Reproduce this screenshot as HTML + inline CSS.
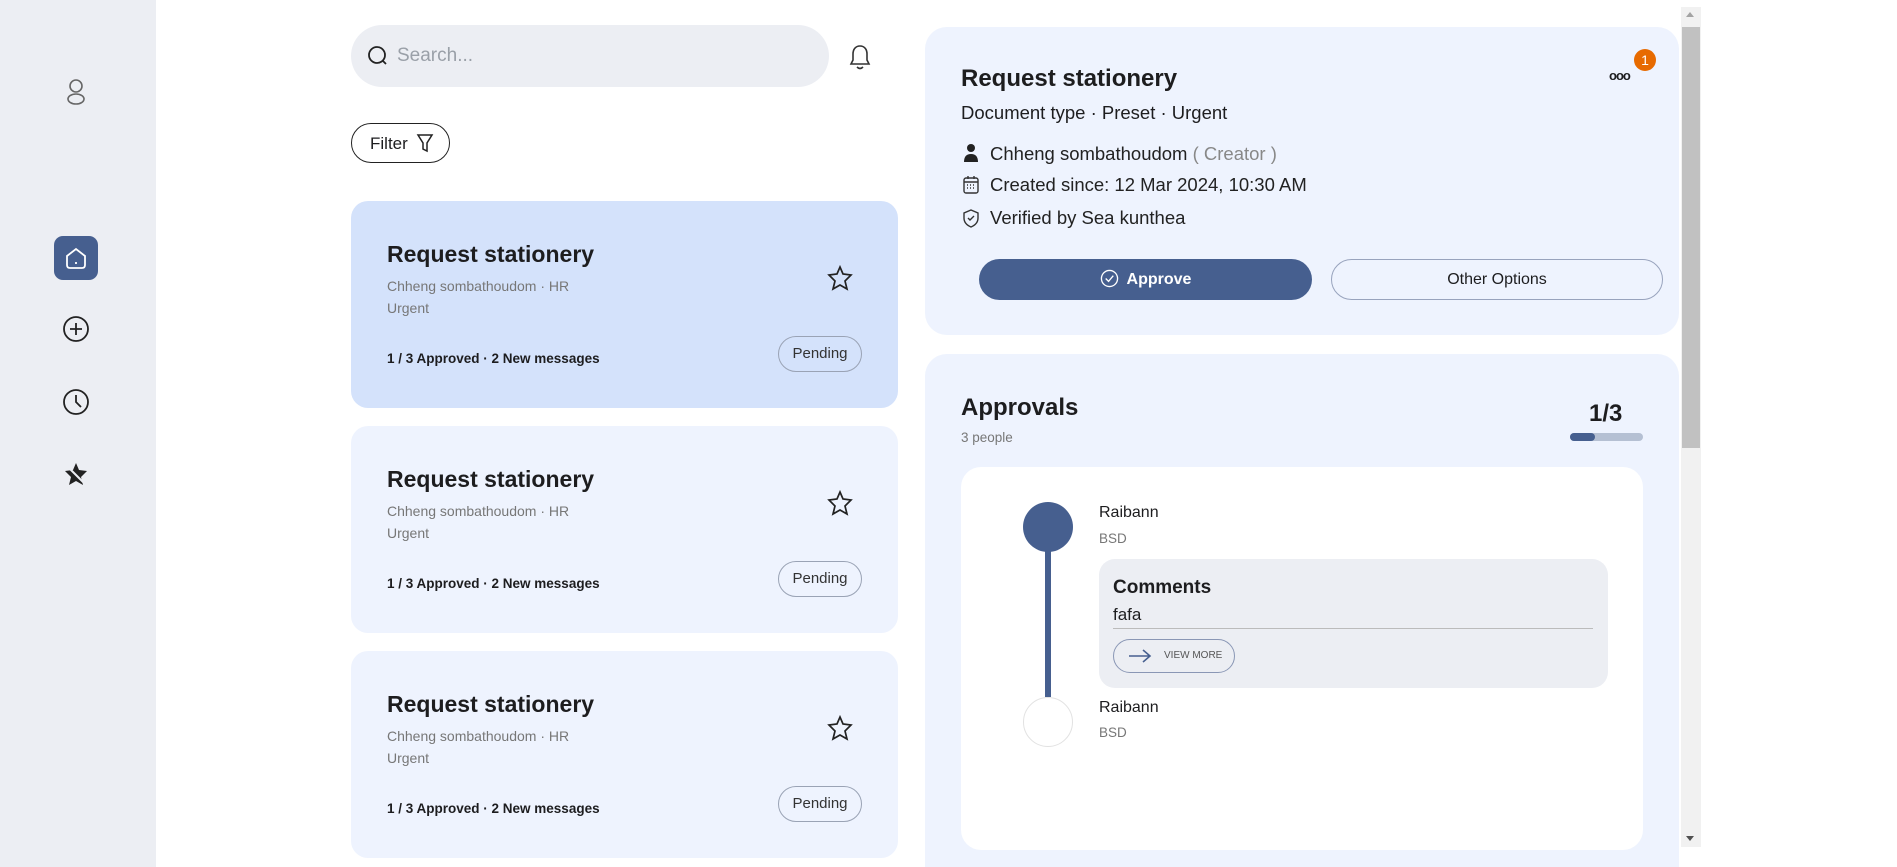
<!DOCTYPE html>
<html><head><meta charset="utf-8"><style>
*{box-sizing:border-box;margin:0;padding:0}
html{width:1897px;height:867px;overflow:hidden}
body{width:1897px;height:867px;overflow:hidden;background:#fff;font-family:"Liberation Sans",sans-serif;color:#1d1d1f;position:relative}
.abs{position:absolute}
.side{left:0;top:0;width:156px;height:867px;background:#eceef3}
.search{left:351px;top:25px;width:478px;height:62px;border-radius:31px;background:#eceef3}
.search span{position:absolute;left:46px;top:20px;font-size:19px;color:#9aa0a8}
.filter{left:351px;top:123px;width:99px;height:40px;border:1.5px solid #222;border-radius:20px;font-size:17px;padding:10px 0 0 18px}
.card{left:351px;width:547px;height:207px;border-radius:17px;background:#eef3fe}
.card h2{position:absolute;left:36px;top:40px;font-size:23px;font-weight:bold}
.card .s{position:absolute;left:36px;font-size:14px;color:#777}
.card .b{position:absolute;left:36px;top:150px;font-size:13.5px;font-weight:bold}
.pend{position:absolute;left:427px;top:135px;width:84px;height:36px;border:1px solid #9aa3b5;border-radius:18px;font-size:15px;text-align:center;line-height:34px;color:#333}
.star{position:absolute;left:475px;top:63px}
.panel{left:925px;width:754px;background:#eef3fe;border-radius:22px}
.row{position:absolute;left:65px;font-size:18.5px;color:#222}
</style></head><body>
<div class="abs side"></div>
<svg class="abs" style="left:64px;top:78px" width="24" height="28" viewBox="0 0 24 28" fill="none" stroke="#666" stroke-width="1.6"><circle cx="12" cy="8" r="6"/><ellipse cx="12" cy="21" rx="8" ry="5"/></svg>
<div class="abs" style="left:54px;top:236px;width:44px;height:44px;border-radius:9px;background:#465f8f"></div>
<svg class="abs" style="left:63px;top:245px" width="26" height="26" viewBox="0 0 26 26" fill="none" stroke="#fff" stroke-width="1.8"><path d="M4 11 L13 4 L22 11 V20 Q22 23 19 23 H7 Q4 23 4 20 Z"/><path d="M13 17 V19"/></svg>
<svg class="abs" style="left:62px;top:315px" width="28" height="28" viewBox="0 0 28 28" fill="none" stroke="#222" stroke-width="1.8"><circle cx="14" cy="14" r="12"/><path d="M14 8V20M8 14H20"/></svg>
<svg class="abs" style="left:62px;top:388px" width="28" height="28" viewBox="0 0 28 28" fill="none" stroke="#222" stroke-width="1.8"><circle cx="14" cy="14" r="12"/><path d="M14 7V14L19 19"/></svg>
<svg class="abs" style="left:62px;top:460px" width="28" height="28" viewBox="0 0 28 28" fill="#222"><path d="M14 3 L17 10 L25 11 L19 17 L21 25 L14 21 L7 25 L9 17 L3 11 L11 10 Z"/><path d="M3 4 L24 25" stroke="#eceef3" stroke-width="2"/></svg>

<div class="abs search"><svg style="position:absolute;left:16px;top:20px" width="22" height="22" viewBox="0 0 22 22" fill="none" stroke="#222" stroke-width="1.8"><circle cx="10" cy="10" r="8"/><path d="M16 16L19 19"/></svg><span>Search...</span></div>
<svg class="abs" style="left:848px;top:43px" width="24" height="28" viewBox="0 0 24 28" fill="none" stroke="#333" stroke-width="1.6"><path d="M12 3 C7 3 5 7 5 11 V17 L3 21 H21 L19 17 V11 C19 7 17 3 12 3Z"/><path d="M9 24 Q12 27 15 24"/></svg>
<div class="abs filter">Filter<svg style="position:absolute;left:64px;top:9px" width="18" height="20" viewBox="0 0 18 20" fill="none" stroke="#222" stroke-width="1.5"><path d="M2 2H16L11 10V18L7 16V10Z"/></svg></div>

<div class="abs card" style="top:201px;background:#d4e2fb"><h2>Request stationery</h2><div class="s" style="top:77px">Chheng sombathoudom · HR</div><div class="s" style="top:99px">Urgent</div><div class="b">1 / 3 Approved · 2 New messages</div><div class="pend">Pending</div><svg class="star" width="28" height="28" viewBox="0 0 28 28" fill="none" stroke="#222" stroke-width="1.7"><path d="M14 3 L17 10 L25 11 L19 17 L21 25 L14 21 L7 25 L9 17 L3 11 L11 10 Z"/></svg></div>
<div class="abs card" style="top:426px"><h2>Request stationery</h2><div class="s" style="top:77px">Chheng sombathoudom · HR</div><div class="s" style="top:99px">Urgent</div><div class="b">1 / 3 Approved · 2 New messages</div><div class="pend">Pending</div><svg class="star" width="28" height="28" viewBox="0 0 28 28" fill="none" stroke="#222" stroke-width="1.7"><path d="M14 3 L17 10 L25 11 L19 17 L21 25 L14 21 L7 25 L9 17 L3 11 L11 10 Z"/></svg></div>
<div class="abs card" style="top:651px"><h2>Request stationery</h2><div class="s" style="top:77px">Chheng sombathoudom · HR</div><div class="s" style="top:99px">Urgent</div><div class="b">1 / 3 Approved · 2 New messages</div><div class="pend">Pending</div><svg class="star" width="28" height="28" viewBox="0 0 28 28" fill="none" stroke="#222" stroke-width="1.7"><path d="M14 3 L17 10 L25 11 L19 17 L21 25 L14 21 L7 25 L9 17 L3 11 L11 10 Z"/></svg></div>

<div class="abs panel" style="top:27px;height:308px">
<div class="abs" style="left:36px;top:38px;font-size:24px;font-weight:bold">Request stationery</div>
<div class="abs" style="left:36px;top:75px;font-size:18.5px">Document type · Preset · Urgent</div>
<svg class="abs" style="left:38px;top:116px" width="16" height="20" viewBox="0 0 16 20" fill="#222"><circle cx="8" cy="5" r="4"/><path d="M1 19 Q1 11 8 11 Q15 11 15 19Z"/></svg>
<div class="row" style="top:116px">Chheng sombathoudom <span style="color:#888">( Creator )</span></div>
<svg class="abs" style="left:37px;top:148px" width="18" height="20" viewBox="0 0 18 20" fill="none" stroke="#333" stroke-width="1.4"><rect x="2" y="3" width="14" height="15" rx="2"/><path d="M2 7H16M6 1V4M12 1V4M5 10h1M8 10h1M11 10h1M5 13h1M8 13h1M11 13h1"/></svg>
<div class="row" style="top:147px">Created since: 12 Mar 2024, 10:30 AM</div>
<svg class="abs" style="left:37px;top:181px" width="18" height="20" viewBox="0 0 18 20" fill="none" stroke="#333" stroke-width="1.4"><path d="M9 2 L16 5 V10 Q16 16 9 19 Q2 16 2 10 V5 Z"/><path d="M6 10L8 12L12 8"/></svg>
<div class="row" style="top:180px">Verified by Sea kunthea</div>
<div class="abs" style="left:54px;top:232px;width:333px;height:41px;border-radius:21px;background:#465f8f;color:#fff;font-size:16px;font-weight:bold;text-align:center;line-height:41px"><svg style="vertical-align:-4px;margin-right:8px" width="19" height="19" viewBox="0 0 20 20" fill="none" stroke="#fff" stroke-width="1.4"><circle cx="10" cy="10" r="8.5"/><path d="M6 10L9 13L14 7"/></svg>Approve</div>
<div class="abs" style="left:406px;top:232px;width:332px;height:41px;border-radius:21px;border:1px solid #98a3bd;font-size:16px;text-align:center;line-height:39px">Other Options</div>
<div class="abs" style="left:684px;top:41px;font-size:13px;font-weight:bold;letter-spacing:-1px">ooo</div>
<div class="abs" style="left:709px;top:22px;width:22px;height:22px;border-radius:11px;background:#e76a00;color:#fff;font-size:14px;text-align:center;line-height:22px">1</div>
</div>

<div class="abs panel" style="top:354px;height:513px;border-radius:22px 22px 0 0">
<div class="abs" style="left:36px;top:40px;font-size:24px;font-weight:bold">Approvals</div>
<div class="abs" style="left:36px;top:76px;font-size:13.5px;color:#777">3 people</div>
<div class="abs" style="left:664px;top:46px;font-size:24px;font-weight:bold">1/3</div>
<div class="abs" style="left:645px;top:79px;width:73px;height:8px;border-radius:4px;background:#b5c0d3"><div style="width:25px;height:8px;border-radius:4px;background:#465f8f"></div></div>
<div class="abs" style="left:36px;top:113px;width:682px;height:383px;background:#fff;border-radius:20px">
<div class="abs" style="left:84px;top:80px;width:6px;height:150px;background:#465f8f"></div>
<div class="abs" style="left:62px;top:35px;width:50px;height:50px;border-radius:25px;background:#465f8f"></div>
<div class="abs" style="left:62px;top:230px;width:50px;height:50px;border-radius:25px;background:#fff;border:1px solid #e2e2e2"></div>
<div class="abs" style="left:138px;top:37px;font-size:16px">Raibann</div>
<div class="abs" style="left:138px;top:64px;font-size:13.5px;color:#777">BSD</div>
<div class="abs" style="left:138px;top:92px;width:509px;height:129px;background:#eceef3;border-radius:16px">
<div class="abs" style="left:14px;top:18px;font-size:19px;font-weight:bold">Comments</div>
<div class="abs" style="left:14px;top:46px;font-size:17px">fafa</div>
<div class="abs" style="left:14px;top:69px;width:480px;height:1px;background:#bbb"></div>
<div class="abs" style="left:14px;top:80px;width:122px;height:34px;border:1px solid #8a97b5;border-radius:17px;font-size:10px;color:#555;line-height:32px;padding-left:50px">VIEW MORE<svg style="position:absolute;left:14px;top:8px" width="24" height="16" viewBox="0 0 24 16" fill="none" stroke="#465f8f" stroke-width="1.6"><path d="M1 8H22M15 2L22 8L15 14"/></svg></div>
</div>
<div class="abs" style="left:138px;top:232px;font-size:16px">Raibann</div>
<div class="abs" style="left:138px;top:258px;font-size:13.5px;color:#777">BSD</div>
</div>
</div>

<div class="abs" style="left:1681px;top:7px;width:20px;height:840px;background:#f1f1f1"></div>
<div class="abs" style="left:1682px;top:27px;width:18px;height:421px;background:#c1c1c1"></div>
<div class="abs" style="left:1686px;top:12px;width:0;height:0;border-left:4px solid transparent;border-right:4px solid transparent;border-bottom:5px solid #a3a3a3"></div>
<div class="abs" style="left:1686px;top:836px;width:0;height:0;border-left:4px solid transparent;border-right:4px solid transparent;border-top:5px solid #505050"></div>
</body></html>
